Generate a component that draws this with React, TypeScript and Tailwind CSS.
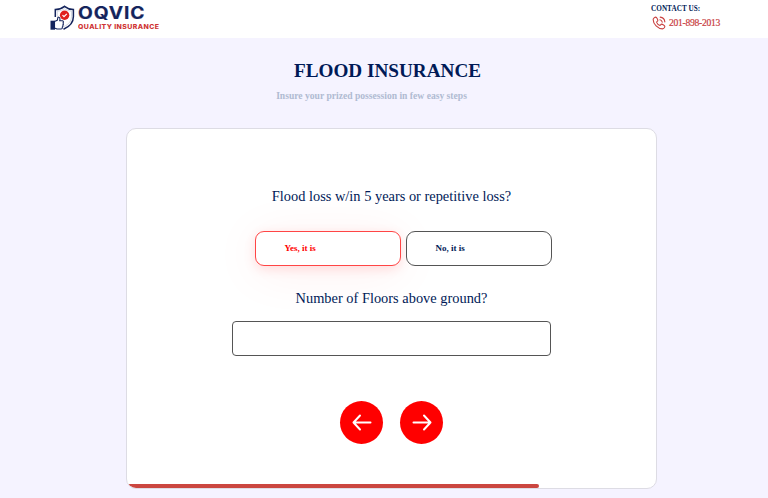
import React from "react";

function Logo() {
  return (
    <div className="flex h-[38px] items-start pl-[50px] pt-[5px]">
      <svg width="26" height="26" viewBox="0 0 26 26" fill="none">
        <path d="M5.3 12V4.6C9 4.5 12 3.3 14.5 1.3C17 3.3 20 4.5 23.4 4.6V11.5C23.4 17.5 20 21.5 13.5 24.2" stroke="#14245c" strokeWidth="1.5" />
        <path d="M7.3 11V6.2C10 6 12.5 5 14.5 3.7C16.5 5 19 6 21.5 6.2V11.5C21.5 16 18.5 19.5 14 21.5" stroke="#b9bfd2" strokeWidth="0.6" />
        <path d="M4.5 16.5L7.3 15.3L8 12C10 12.2 10.3 13.5 9.7 15.8H12.5C13.5 16 13.7 17.3 13 18C13.6 18.7 13.5 19.5 12.8 20C13.2 20.8 13 21.7 12.3 22C12.5 23.3 12 24 11 24H7L4.5 23Z" fill="#fff" stroke="#14245c" strokeWidth="1.1" strokeLinejoin="round" />
        <circle cx="14.6" cy="10.2" r="4.7" fill="#e0201c" />
        <path d="M12.5 10.2L14 11.7L16.8 8.8" stroke="#fff" strokeWidth="1.2" />
        <path d="M0.5 15.7H5V24.7H0.5Z" fill="#14245c" />
      </svg>
      <div className="ml-[2px] flex flex-col font-['Inter',sans-serif] whitespace-nowrap">
        <span className="origin-left scale-x-[1.13] text-[17px] leading-[17px] font-bold tracking-[0.8px] text-[#14245c] [-webkit-text-stroke:0.2px_#14245c]">OQVIC</span>
        <span className="w-fit origin-left scale-x-[1.12] text-[6.2px] leading-[9px] font-extrabold tracking-[0.36px] text-[#cf3434]">QUALITY INSURANCE</span>
      </div>
    </div>
  );
}

function Arrow({ left }: { left?: boolean }) {
  return (
    <button className="flex size-[43px] items-center justify-center rounded-full bg-[#ff0000]">
      <svg width="20" height="18" viewBox="0 0 20 18" fill="none" stroke="#fff" strokeWidth="2" strokeLinecap="round" strokeLinejoin="round" className={left ? "-scale-x-100" : ""}>
        <path d="M1.5 8.5H18.5M12 1.5L18.5 8.5L12 15.5" />
      </svg>
    </button>
  );
}

export default function App() {
  return (
    <div className="h-[498px] w-[768px] overflow-hidden bg-[#f5f3ff] font-['Liberation_Serif',serif] text-[#001a57]">
      <header className="flex h-[38px] justify-between bg-white">
        <Logo />
        <div className="w-[117px] pt-[4px] whitespace-nowrap">
          <div className="text-[7.2px] leading-[10px] font-bold tracking-[0.05px]">CONTACT US:</div>
          <div className="flex items-center gap-[3px] pt-[2px] pl-[1px] text-[#c9403f]">
            <svg width="14" height="14" viewBox="0 0 24 24" fill="none" stroke="currentColor" strokeWidth="1.9" strokeLinejoin="round" strokeLinecap="round">
              <path d="M14 2a9 9 0 0 1 8 8M13.5 6.5a5 5 0 0 1 4 4M2 6C2 4 5 2 6.5 2C8 2 10 6 10 7.5C10 9 7.5 9.5 8 11C9 13.5 11 15.5 13 16C14.5 16.5 15 14 16.5 14C18 14 22 16.5 22 17.5C22 19.5 20 22 18 22C10 22 2 14 2 6Z" />
            </svg>
            <span className="-mt-px text-[9.6px] leading-[11px] tracking-[-0.28px] [-webkit-text-stroke:0.2px_#c9403f]">201-898-2013</span>
          </div>
        </div>
      </header>
      <main className="flex flex-col">
        <h1 className="mt-[21px] pl-[7px] text-center text-[19.2px] leading-[23px] font-bold">FLOOD INSURANCE</h1>
        <p className="mt-[8px] pr-[25px] text-center text-[9.6px] leading-[12px] font-bold text-[#b0bbd2]">Insure your prized possession in few easy steps</p>
        <section className="mt-[26px] ml-[126px] flex h-[361px] w-[531px] flex-col items-center overflow-hidden rounded-[10px] border border-[#dddce4] bg-white">
          <h2 className="mt-[58px] text-[14.4px] leading-[18px]">Flood loss w/in 5 years or repetitive loss?</h2>
          <div className="mt-[26px] flex gap-[5px] pl-[23px] text-[9px] font-bold">
            <button className="h-[35px] w-[146px] rounded-[9px] border border-[#ff4545] bg-white pl-[29px] text-left text-[#ff0000] shadow-[0_3px_12px_rgba(255,0,0,0.12),0_6px_50px_rgba(255,0,0,0.07)]">Yes, it is</button>
            <button className="h-[35px] w-[146px] rounded-[9px] border border-[#555] bg-white pl-[29px] text-left">No, it is</button>
          </div>
          <h2 className="mt-[23px] text-[14.4px] leading-[18px]">Number of Floors above ground?</h2>
          <input className="mt-[14px] mr-px h-[35px] w-[319px] rounded-[4px] border border-[#555] bg-white" />
          <div className="mt-[45px] flex gap-[17px]"><Arrow left /><Arrow /></div>
          <div className="mt-auto h-[4px] w-[412px] self-start rounded-r-[2px] bg-[#cb4640]" />
        </section>
      </main>
    </div>
  );
}
